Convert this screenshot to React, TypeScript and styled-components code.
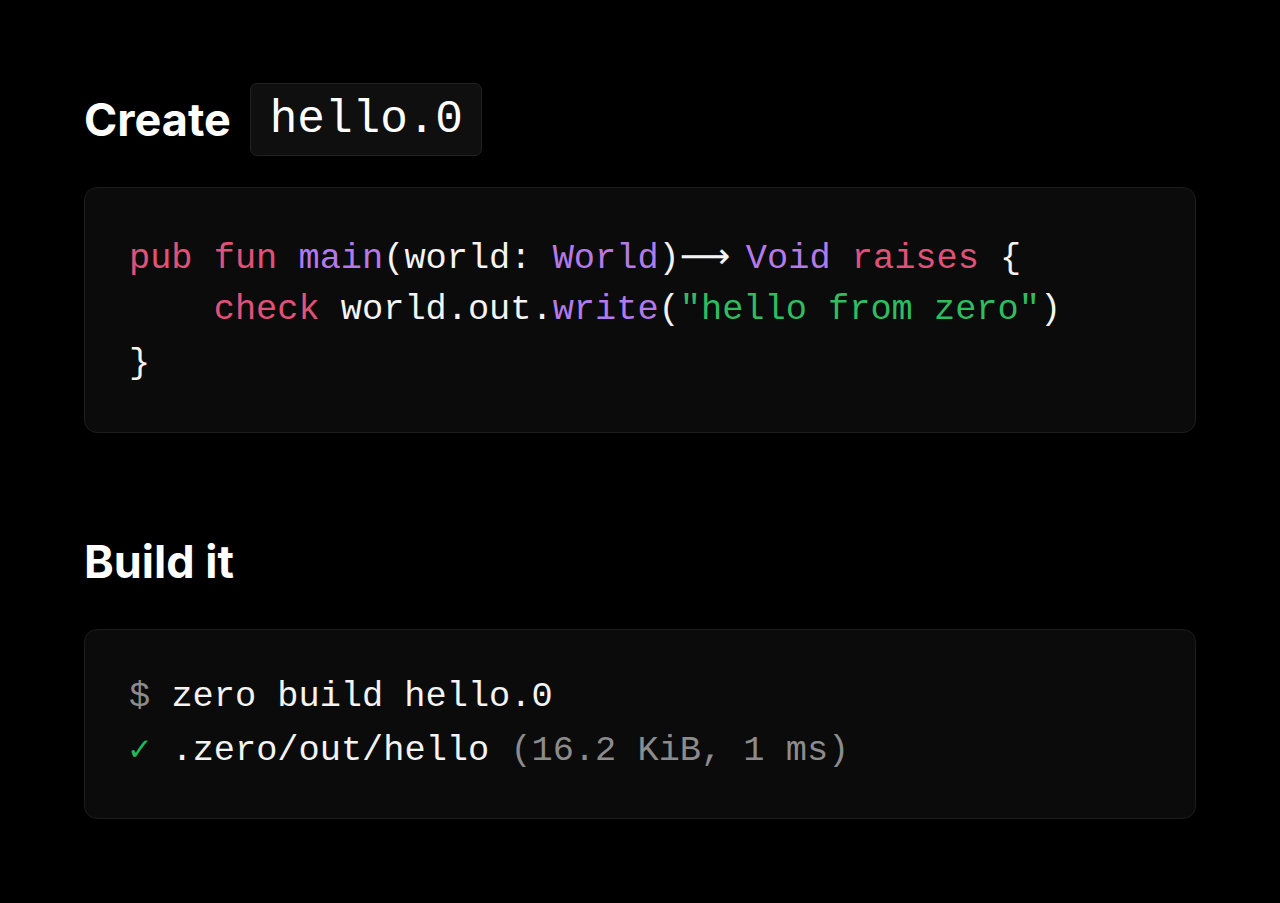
import React from "react";
import styled, { createGlobalStyle } from "styled-components";

const GlobalStyle = createGlobalStyle`
  html, body {
    margin: 0;
    padding: 0;
    background: #000000;
  }
  body {
    font-family: Inter, "Noto Sans", sans-serif;
    color: #ffffff;
  }
`;

const Page = styled.main`
  display: flex;
  flex-direction: column;
  gap: 92px;
  padding: 83px 84px 84px 84px;
  min-height: 903px;
  box-sizing: border-box;
  background: #000000;
`;

const Section = styled.section`
  display: flex;
  flex-direction: column;
  gap: 31px;
`;

const Heading = styled.h2`
  display: flex;
  align-items: center;
  gap: 19px;
  margin: 0;
  height: 73px;
  font-family: Inter, "Noto Sans", sans-serif;
  font-weight: 700;
  font-size: 45px;
  letter-spacing: 0;
  color: #ffffff;
`;

const mono = `"Liberation Mono", "DejaVu Sans Mono", monospace`;

const InlineCode = styled.code`
  display: inline-flex;
  align-items: center;
  box-sizing: border-box;
  height: 73px;
  padding: 0 18px 0 19px;
  border-radius: 7px;
  background: #0f0f0f;
  border: 1px solid #222222;
  font-family: ${mono};
  font-variant-numeric: slashed-zero;
  font-weight: 400;
  font-size: 46px;
  letter-spacing: 0;
  color: #ffffff;
`;

const CodeBlock = styled.pre<{ $vpad: number }>`
  margin: 0;
  box-sizing: border-box;
  padding: ${(p) => p.$vpad}px 44px;
  border-radius: 13px;
  background: #0b0b0b;
  border: 1px solid #1d1d1d;
  font-family: ${mono};
  font-variant-numeric: slashed-zero;
  font-size: 35.3px;
  line-height: 54px;
  color: #f4f4f4;
  white-space: pre;
`;

const Line = styled.div`
  display: block;
  height: 54px;
`;

const Arrow = styled.span`
  display: inline-block;
  width: 2ch;
  text-align: center;
  font-family: "DejaVu Sans", ${mono};
  color: #f4f4f4;
`;

type Tone = "kw" | "fn" | "str" | "muted" | "ok" | "plain";

const toneColor: Record<Tone, string> = {
  kw: "#e25179",
  fn: "#b47aea",
  str: "#2ebd5f",
  muted: "#8c8c8c",
  ok: "#22b85a",
  plain: "#f4f4f4",
};

const Tok = styled.span<{ $tone: Tone }>`
  color: ${(p) => toneColor[p.$tone]};
`;

export default function App() {
  return (
    <>
      <GlobalStyle />
      <Page>
        <Section>
          <Heading>
            Create <InlineCode>hello.0</InlineCode>
          </Heading>
          <CodeBlock $vpad={41}>
            <Line>
              <Tok $tone="kw">pub</Tok> <Tok $tone="kw">fun</Tok>{" "}
              <Tok $tone="fn">main</Tok>
              <Tok $tone="plain">(world: </Tok>
              <Tok $tone="fn">World</Tok>
              <Tok $tone="plain">)</Tok>
              <Arrow>⟶</Arrow>{" "}
              <Tok $tone="fn">Void</Tok> <Tok $tone="kw">raises</Tok>{" "}
              <Tok $tone="plain">{"{"}</Tok>
            </Line>
            <Line>
              {"    "}
              <Tok $tone="kw">check</Tok>{" "}
              <Tok $tone="plain">world.out.</Tok>
              <Tok $tone="fn">write</Tok>
              <Tok $tone="plain">(</Tok>
              <Tok $tone="str">"hello from zero"</Tok>
              <Tok $tone="plain">)</Tok>
            </Line>
            <Line>
              <Tok $tone="plain">{"}"}</Tok>
            </Line>
          </CodeBlock>
        </Section>
        <Section>
          <Heading>Build it</Heading>
          <CodeBlock $vpad={40}>
            <Line>
              <Tok $tone="muted">$</Tok> <Tok $tone="plain">zero build hello.0</Tok>
            </Line>
            <Line>
              <Tok $tone="ok">✓</Tok> <Tok $tone="plain">.zero/out/hello</Tok>{" "}
              <Tok $tone="muted">(16.2 KiB, 1 ms)</Tok>
            </Line>
          </CodeBlock>
        </Section>
      </Page>
    </>
  );
}
